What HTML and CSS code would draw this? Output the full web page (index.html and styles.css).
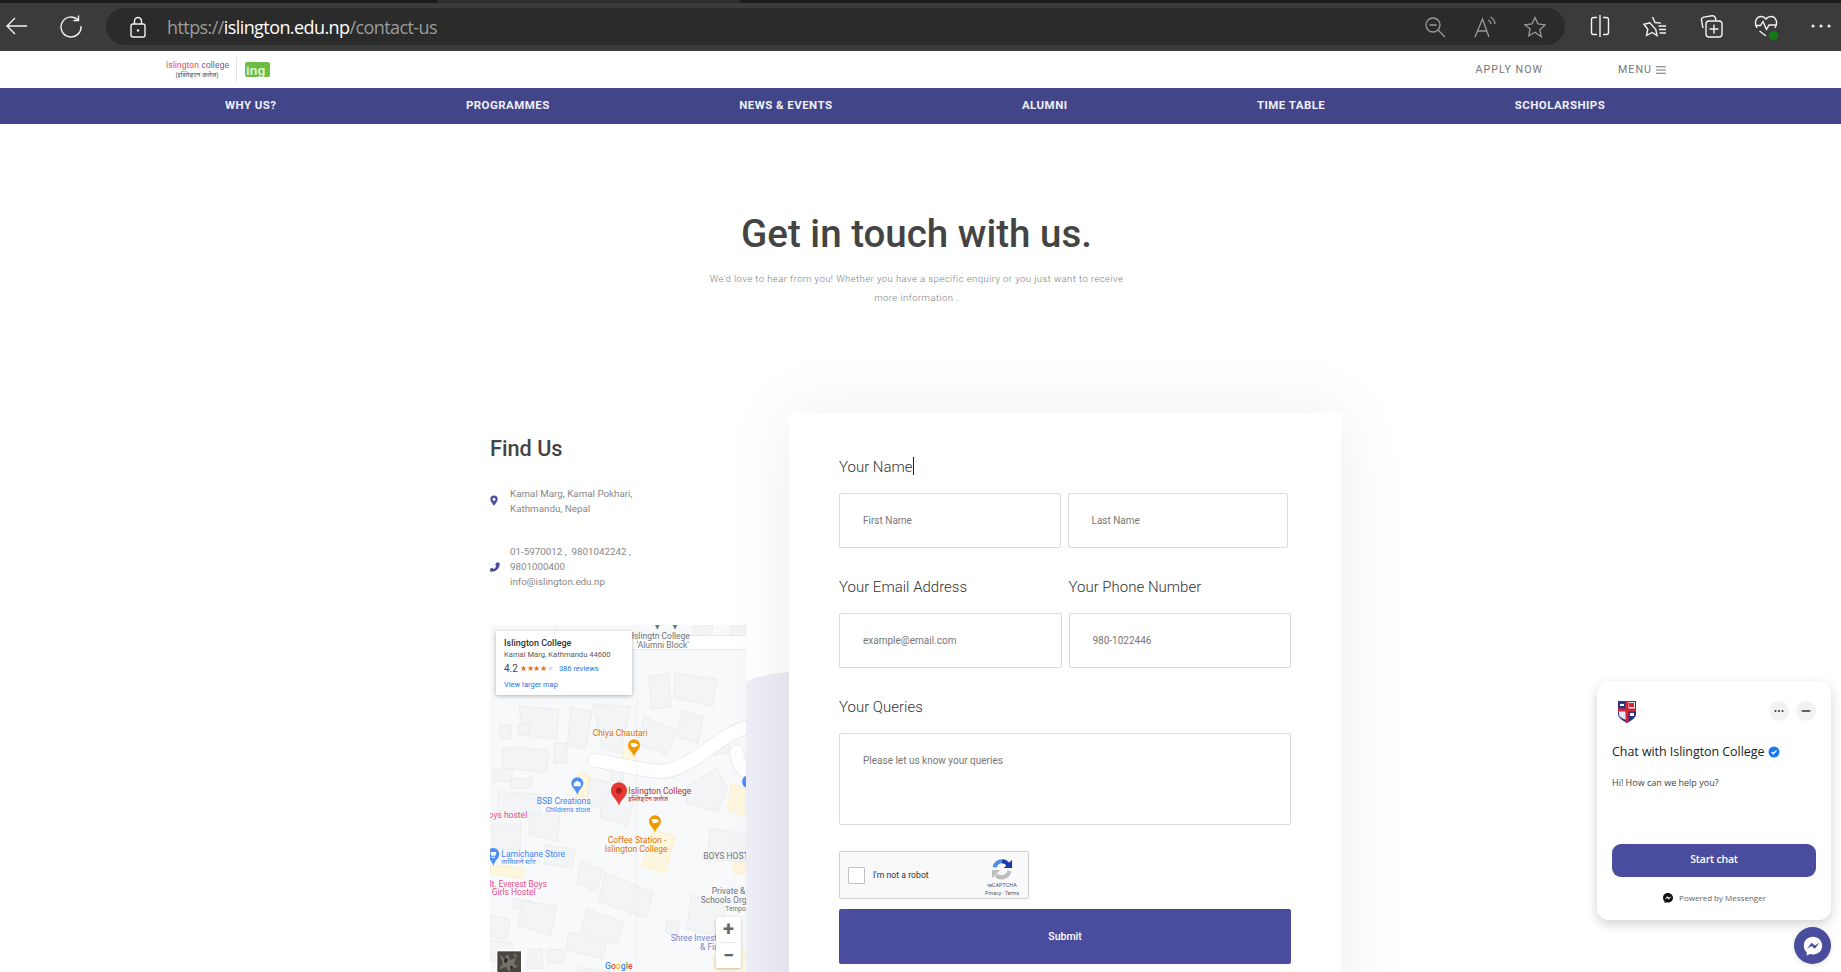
FILE: index.html
```html
<!DOCTYPE html>
<html lang="en">
<head>
<meta charset="utf-8">
<title>Contact Us - Islington College</title>
<link rel="stylesheet" href="styles.css">
</head>
<body>
<div class="browser">
  <div class="tabstrip"><span class="strip-a"></span><span class="strip-b"></span><span class="strip-c"></span></div>
  <div class="toolbar">
    <svg class="tool first" viewBox="0 0 24 24"><path d="M23 12H3M11 4l-8 8 8 8"/></svg>
    <svg class="tool reload" viewBox="0 0 24 24"><path d="M19 5.800A10 10 0 1 0 22 12M19.500 1.500v5h-5"/></svg>
    <div class="address">
      <svg class="tool lock" viewBox="0 0 24 24"><rect x="5" y="9" width="14" height="13" rx="2"/><path d="M8.500 9V6a3.500 3.500 0 0 1 7 0v3"/><circle class="solid" cx="12" cy="15.500" r="1.200"/></svg>
      <div class="url"><span class="dim">https://</span>islington.edu.np<span class="dim">/contact-us</span></div>
      <div class="addr-icons">
        <svg class="tool muted" viewBox="0 0 24 24"><circle cx="10" cy="10" r="7"/><path d="M15 15l7 7M6.500 10h7"/></svg>
        <svg class="tool muted" viewBox="0 0 24 24"><path d="M2 22L9.500 4 16 22M4.500 16h9.500M15 5a5 5 0 0 1 3 4M17.500 2a9 9 0 0 1 4.500 7"/></svg>
        <svg class="tool muted" viewBox="0 0 24 24"><path d="M12 2.500l3 6.500 7 .9-5.100 4.800 1.300 7L12 17.200l-6.200 3.500 1.300-7L2 9.900 9 9z"/></svg>
      </div>
    </div>
    <div class="tool-icons">
      <svg class="tool" viewBox="0 0 24 24"><path d="M9 3.500H5.500a2 2 0 0 0-2 2v13a2 2 0 0 0 2 2H9M15 3.500h3.500a2 2 0 0 1 2 2v13a2 2 0 0 1-2 2H15M12 1v22"/></svg>
      <svg class="tool" viewBox="0 0 24 24"><path d="M9.500 3L12 8.500l6 .6M12.800 15.500L14 21.500l-5-3-5.500 3 1.300-6.300L1 10.300l5.800-1.500zM15.500 12H23M16 15.500h7M16.500 19H23"/></svg>
      <svg class="tool" viewBox="0 0 24 24"><path d="M4 14L2.500 6.500a3 3 0 0 1 2.400-3.400L13 1.800a3 3 0 0 1 3.400 2.200l.6 2.500"/><rect x="7" y="7" width="16" height="16" rx="3"/><path d="M15 10.500v9M10.500 15h9"/></svg>
      <span class="heart">
        <svg class="tool" viewBox="0 0 24 24"><path d="M3 14C-.5 8 2.500 2.500 7 2.500c2.300 0 4 1 5 2.500 1-1.500 2.700-2.500 5-2.500 4.500 0 7.500 5.500 4 11.500M1 11.500h5.500l2.500-4 3.500 8 2.500-4.500h8M5.500 17l6.500 5"/></svg>
        <i class="heart-dot"></i>
      </span>
      <svg class="tool" viewBox="0 0 24 24"><circle class="solid" cx="4" cy="12" r="1.500"/><circle class="solid" cx="12" cy="12" r="1.500"/><circle class="solid" cx="20" cy="12" r="1.500"/></svg>
    </div>
  </div>
</div>

<header class="topbar">
  <div class="logo">
    <div class="logo-text">
      <div class="logo-main"><span class="red">íslington</span> <span class="blue">college</span></div>
      <div class="logo-sub">(इस्लिङ्टन कलेज)</div>
    </div>
    <span class="logo-rule"></span>
    <span class="logo-ing">ing</span>
  </div>
  <div class="top-links">
    <a class="apply">APPLY NOW</a>
    <a class="menu">MENU <svg class="burger" viewBox="0 0 10 8"><path d="M0 .75h10M0 4h10M0 7.250h10"/></svg></a>
  </div>
</header>

<nav class="mainnav">
  <a>WHY US?</a><a>PROGRAMMES</a><a>NEWS &amp; EVENTS</a><a>ALUMNI</a><a>TIME TABLE</a><a>SCHOLARSHIPS</a>
</nav>

<section class="hero">
  <h1>Get in touch with us.</h1>
  <p>We'd love to hear from you! Whether you have a specific enquiry or you just want to receive more information .</p>
</section>

<section class="contact">
  <div class="blob"></div>
  <aside class="find">
    <h2>Find Us</h2>
    <div class="info-row first-row">
      <svg class="info-icon" viewBox="0 0 12 16"><path fill-rule="evenodd" d="M6 .5a5.500 5.500 0 0 0-5.500 5.500C.5 9.500 6 15.500 6 15.500S11.500 9.500 11.500 6A5.500 5.500 0 0 0 6 .5zm0 3.200a2.300 2.300 0 1 1 0 4.600 2.300 2.300 0 0 1 0-4.600z"/></svg>
      <div>Kamal Marg, Kamal Pokhari,<br>Kathmandu, Nepal</div>
    </div>
    <div class="info-row">
      <svg class="info-icon phone" viewBox="0 0 16 16"><path d="M11 .5l4.500 1c.4 7.500-4.500 13.500-12.500 14-1.500.1-2.700-.4-2.800-1.400L.2 10.500l4.600-1 1.200 2c2-1.300 3.300-3.300 3.800-6L8 4.500z"/></svg>
      <div>01-5970012 ,&nbsp; 9801042242 ,<br>9801000400<br>info@islington.edu.np</div>
    </div>
    <div class="map">
      <svg class="map-canvas" viewBox="30 15 768 1041">
        <g class="lots">
          <path d="M430 382l40 4-10 46-32-6z"/><path d="M295 458l32 2-5 70-27 0z"/><path d="M520 630l65 20-30 110-68-22z"/><path d="M30 735l100 10-5 30-95-15z"/><path d="M755 490l50 20v80l-63-20z"/><path d="M765 720l40 8v36l-45-6z"/><path d="M700 1010l100-20v66H705z"/>
        </g>
        <g class="bld">
          <path d="M505 168l60-6 10 100-60 4z"/><path d="M585 158l125 20-13 82-115-28z"/><path d="M118 258l118 10-6 90-105-14z"/><path d="M272 262l65 14-20 112-55-14z"/><path d="M337 252l115 8-30 140-55-12z"/><path d="M492 290l100 42-30 72-90-30z"/><path d="M605 272l66 18-18 80-58-18z"/><path d="M60 312l35 3-3 42-32-3z"/><path d="M114 313h34v32h-34z"/><path d="M222 370h38v60h-38z"/><path d="M68 388l45-8 92 12-4 66-133-14z"/><path d="M38 448h58v36H38z"/><path d="M94 475h61v30H94z"/><path d="M392 450h38v32h-38z"/><path d="M330 472l62 18-14 80-56-18z"/><path d="M362 562l40-60 60 30-20 84-80-22z"/><path d="M55 515l130 8-8 72-125-8z"/><path d="M150 580l90 6-8 78-86-20z"/><path d="M35 612h88l-3 80-85-8z"/><path d="M195 675l90 12-8 58-84-14z"/><path d="M300 725l70 22-20 66-58-20z"/><path d="M375 758l145 60-22 78-142-52z"/><path d="M100 835l55 8-5 30-55-10z"/><path d="M128 845l102 12-18 88-98-28z"/><path d="M320 865l113 42-22 68-110-40z"/><path d="M30 885l60 15-12 60-48-12z"/><path d="M265 935l115 32-12 50-110-28z"/><path d="M560 900l40 8-8 38-36-8z"/><path d="M635 825l100 30-8 95-108-22z"/><path d="M690 625l110 18v80H680z"/><path d="M620 500l90-55 32 60-30 72-92-30z"/><path d="M145 990l40-5 5 60h-50z"/><path d="M200 990l50-3 4 40-50 4z"/><path d="M300 1042l100 14H290z"/><path d="M640 20l60-5-8 38-50-5z"/><path d="M748 20l50-5v34l-45 2z"/><path d="M700 380l50-8-2 26-48 8z"/><path d="M30 960l70 10-6 60-64-10z"/>
        </g>
        <g class="roads">
          <path d="M345 422c60 6 130 30 195 32 90 0 160-100 260-132"/><path d="M770 395c0 40 30 60 50 80"/><path d="M440 68h360"/>
        </g>
        <g class="roads-in">
          <path d="M345 422c60 6 130 30 195 32 90 0 160-100 260-132"/><path d="M770 395c0 40 30 60 50 80"/><path d="M440 68h360"/>
        </g>
        <path class="grid-line" d="M470 15v1041M230 15v40"/>
        <path class="pin-gray" d="M525 15h14l-7 14zM578 15h14l-7 14z"/>

        <g class="l-gray"><text x="455" y="58">Islingtn College</text><text x="470" y="85">'Alumni Block'</text><text x="670" y="716">BOYS HOSTEL</text><text x="695" y="823">Private &amp;</text><text x="662" y="850">Schools Org</text><text class="l-sm" x="736" y="872">Tempo</text></g>
        <g class="l-orange"><text x="338" y="348">Chiya Chautari</text><text x="383" y="668">Coffee Station -</text><text x="374" y="695">Islington College</text></g>
        <g class="l-blue"><text x="170" y="553">BSB Creations</text><text class="l-sm" x="197" y="575">Childrens store</text><text x="64" y="710">Lamichane Store</text><text class="l-sm" x="64" y="732">लामिछाने स्टोर</text></g>
        <g class="l-pink"><text x="10" y="595">Boys hostel</text><text x="12" y="800">Mt. Everest Boys</text><text x="35" y="826">Girls Hostel</text></g>
        <g class="l-red"><text x="445" y="522">Islington College</text><text class="l-sm" x="445" y="542">इस्लिङ्टन कलेज</text></g>
        <g class="l-indigo"><text x="572" y="964">Shree Invest</text><text x="660" y="990">&amp; Fin</text></g>

        <path class="mk-orange" d="M462 358a18 18 0 0 1 18 18c0 14-14 18-18 34-4-16-18-20-18-34a18 18 0 0 1 18-18z"/>
        <path class="mk-white" d="M452 369h17v3h4v7h-5a8 8 0 0 1-6 3c-6 0-10-5-10-13z"/>
        <path class="mk-orange" d="M525 586a18 18 0 0 1 18 18c0 14-14 18-18 34-4-16-18-20-18-34a18 18 0 0 1 18-18z"/>
        <path class="mk-white" d="M515 597h17v3h4v7h-5a8 8 0 0 1-6 3c-6 0-10-5-10-13z"/>
        <path class="mk-blue" d="M292 472a18 18 0 0 1 18 18c0 14-14 18-18 36-4-18-18-22-18-36a18 18 0 0 1 18-18z"/>
        <path class="mk-white" d="M283 486h18l2 13h-22zM288 486a4 4 0 0 1 8 0"/>
        <path class="mk-blue" d="M40 684a18 18 0 0 1 18 18c0 14-14 18-18 36-4-18-18-22-18-36a18 18 0 0 1 18-18z"/>
        <path class="mk-white" d="M31 696h18l-3 11H34zM34 710h11v3H34z"/>
        <circle class="mk-blue" cx="805" cy="485" r="19"/>
        <path class="mk-red" d="M417 487c14 0 24 11 24 25 0 18-18 24-24 45-6-21-24-27-24-45 0-14 10-25 24-25z"/>
        <circle class="mk-dark" cx="417" cy="512" r="9"/>

        <text class="g-logo" x="375" y="1048"><tspan class="g-b">G</tspan><tspan class="g-r">o</tspan><tspan class="g-y">o</tspan><tspan class="g-b">g</tspan><tspan class="g-g">l</tspan><tspan class="g-r">e</tspan></text>

        <rect class="sat" x="50" y="992" width="75" height="70"/>
        <path class="sat-a" d="M58 1004l14 10 12-12 6 18 18-6-6 18 12 10-20 2-6 12-10-16-16 6 6-18zM100 1000l12 6-6 8zM62 1036l8 8-10 4z"/>
        <path class="sat-b" d="M74 1012l10 6-4 12-8-4zM92 1036l8 4-4 10-6-6z"/>
      </svg>
      <div class="map-card">
        <div class="mc-title">Islington College</div>
        <div class="mc-addr">Kamal Marg, Kathmandu 44600</div>
        <div class="mc-rate"><span class="mc-num">4.2</span><span class="mc-stars">★★★★<span class="mc-off">★</span></span><a class="mc-link">386 reviews</a></div>
        <a class="mc-link mc-larger">View larger map</a>
      </div>
      <div class="zoom-ctl"><span>+</span><i></i><span>−</span></div>
    </div>
  </aside>

  <form class="card">
    <label class="lbl">Your Name<span class="caret"></span></label>
    <div class="fields fields-a">
      <input type="text" placeholder="First Name">
      <input type="text" placeholder="Last Name">
    </div>
    <div class="fields fields-b labels">
      <label class="lbl">Your Email Address</label>
      <label class="lbl">Your Phone Number</label>
    </div>
    <div class="fields fields-b">
      <input type="text" placeholder="example@email.com">
      <input type="text" placeholder="980-1022446">
    </div>
    <label class="lbl spaced">Your Queries</label>
    <textarea placeholder="Please let us know your queries"></textarea>
    <div class="captcha">
      <span class="cap-box"></span>
      <span class="cap-label">I'm not a robot</span>
      <div class="cap-brand">
        <svg class="cap-logo" viewBox="0 0 24 24"><path class="cap-b" d="M4 10A8.500 8.500 0 0 1 12 3.500"/><path class="cap-d" d="M12 3.500c3 0 5.500 1.500 7 4"/><path class="cap-arrow" d="M23 2v9h-9z"/><path class="cap-g" d="M20 14a8.500 8.500 0 0 1-14.500 4.500"/><path class="cap-g2" d="M1 13h9l-9 9z"/></svg>
        <div class="cap-name">reCAPTCHA</div>
        <div class="cap-terms">Privacy - Terms</div>
      </div>
    </div>
    <button class="submit" type="button">Submit</button>
  </form>
</section>

<aside class="chat">
  <div class="chat-head">
    <svg class="crest" viewBox="0 0 18 22"><path class="c-blue" d="M0 0h18v13c0 4-5 7-9 9-4-2-9-5-9-9z"/><path class="c-white" d="M10 1h7v7h-7zM1 10h7v9c-4-2-7-3-7-6z"/><path class="c-red" d="M7.500 0h3v21l-1.500 1-1.500-1zM0 7.500h18v3H0zM11 2h5v4h-5z"/><path class="c-mid" d="M2 3h4v2H2zM12 12h4v3h-4z"/></svg>
    <div class="chat-btns">
      <span class="chat-btn"><svg viewBox="0 0 12 12"><circle cx="2.500" cy="6" r="1"/><circle cx="6" cy="6" r="1"/><circle cx="9.500" cy="6" r="1"/></svg></span>
      <span class="chat-btn"><svg viewBox="0 0 12 12"><rect x="1.500" y="5.200" width="9" height="1.600" rx=".8"/></svg></span>
    </div>
  </div>
  <div class="chat-title">Chat with Islington College <svg class="verified" viewBox="0 0 12 12"><circle class="v-bg" cx="6" cy="6" r="5.500"/><path class="v-tick" d="M3.500 6l1.800 1.800L8.500 4.500"/></svg></div>
  <div class="chat-msg">Hi! How can we help you?</div>
  <button class="chat-start" type="button">Start chat</button>
  <div class="chat-foot">
    <svg class="m-small" viewBox="0 0 24 24"><path d="M12 2C6.400 2 2 6.100 2 11.700c0 2.900 1.200 5.500 3.200 7.200v3.600l3.300-1.800c1.100.3 2.300.5 3.500.5 5.600 0 10-4.100 10-9.500S17.600 2 12 2z"/><path class="m-zig" d="M5.500 15l5-6.500 3.500 3 5-3-5 6.500-3.500-3z"/></svg>
    <span>Powered by Messenger</span>
  </div>
</aside>
<button class="chat-fab" type="button" aria-label="Open chat">
  <svg viewBox="0 0 24 24"><path d="M12 2C6.400 2 2 6.100 2 11.700c0 2.900 1.200 5.500 3.200 7.200v3.600l3.300-1.800c1.100.3 2.300.5 3.500.5 5.600 0 10-4.100 10-9.500S17.600 2 12 2z"/><path class="fab-zig" d="M5.500 15l5-6.500 3.500 3 5-3-5 6.500-3.500-3z"/></svg>
</button>
</body>
</html>
```
FILE: styles.css
```css
* { box-sizing: border-box; }
html, body { margin: 0; height: 972px; overflow: hidden; background: #fff; }
body { font-family: Roboto, "Noto Sans", sans-serif; color: #444; position: relative; }

/* browser chrome */
.browser { height: 51px; background: #3b3b3b; }
.tabstrip { display: flex; height: 3px; }
.strip-a { width: 438px; background: #1a1a1a; }
.strip-b { width: 302px; background: #2e2e2e; }
.strip-c { flex: 1; background: #1c1c1c; }
.toolbar { display: flex; align-items: flex-start; height: 48px; padding: 5px 8px 0 4px; }
.tool { width: 24px; height: 24px; fill: none; stroke: #f2f2f2; stroke-width: 1.4; flex: none; }
.tool .solid { fill: #f2f2f2; stroke: none; }
.toolbar > .first { margin-top: 6px; }
.toolbar > .reload { margin: 6px 0 0 31px; }
.address { flex: 1; margin-left: 23px; height: 37px; border-radius: 19px; background: #2b2b2b; display: flex; align-items: center; padding: 0 18px 0 20px; }
.url { margin-left: 17px; font: 400 18px "Open Sans", sans-serif; letter-spacing: -.58px; color: #fff; white-space: nowrap; }
.dim { color: #9b9b9b; }
.addr-icons { margin-left: auto; display: flex; gap: 26px; }
.muted { stroke: #9a9a9a; stroke-width: 1.3; }
.tool-icons { display: flex; gap: 31.250px; margin-left: 23px; padding-top: 6px; }
.heart { position: relative; width: 24px; height: 24px; }
.heart-dot { position: absolute; right: 0; bottom: -2px; width: 9px; height: 9px; border-radius: 50%; background: #107c10; }

/* site header */
.topbar { height: 37px; display: flex; align-items: center; justify-content: space-between; padding: 0 175px 0 166px; }
.logo { display: flex; align-items: center; }
.logo-text { width: 62px; text-align: center; }
.logo-main { font: 400 8.400px/10px "Liberation Sans", sans-serif; white-space: nowrap; letter-spacing: .2px; }
.red { color: #ee3a4a; }
.blue { color: #5557a8; }
.logo-sub { font: 400 6.500px/9px "Noto Sans", "Noto Sans Devanagari", sans-serif; color: #555; white-space: nowrap; }
.logo-rule { width: 1px; height: 25px; background: #e4e4e4; margin-left: 8px; }
.logo-ing { width: 25px; height: 15px; margin-left: 8px; background: #6cbd45; border-radius: 2px; color: #dff3cf; font: 700 13px/17px "Liberation Sans", sans-serif; padding-left: 1px; overflow: hidden; }
.top-links { display: flex; align-items: center; color: #777; font-size: 10.700px; letter-spacing: 1px; }
.menu { margin-left: 75px; display: flex; align-items: center; gap: 4px; }
.burger { width: 10px; height: 8px; fill: none; stroke: #777; stroke-width: 1.100; }

.mainnav { height: 36px; background: #434589; display: flex; align-items: center; gap: 189.400px; padding: 0 0 2px 225px; color: #f0f0f8; font-size: 11.500px; font-weight: 700; letter-spacing: .45px; white-space: nowrap; }

/* hero */
.hero { padding: 86px 8px 0 0; text-align: center; }
.hero h1 { margin: 0; font-size: 38.500px; line-height: 48px; font-weight: 500; color: #444; }
.hero p { margin: 11px auto 0; width: 425px; font-size: 9.500px; line-height: 19px; letter-spacing: .43px; font-weight: 300; color: #7d7d7d; }

/* contact */
.contact { position: relative; display: flex; margin-top: 106px; padding-left: 490px; }
.blob { position: absolute; left: 746px; top: 257px; width: 120px; height: 320px; border-top-left-radius: 90px 14px; background: linear-gradient(to right, #efeff7, #e3e4f0); }
.find { width: 256px; flex: none; padding-top: 23px; font-size: 9.800px; line-height: 15px; color: #888; }
.find h2 { margin: 0 0 23.500px; font-size: 21.700px; line-height: 26px; font-weight: 500; color: #444; }
.info-row { display: flex; align-items: center; margin-bottom: 28px; }
.info-icon { width: 8px; height: 11px; fill: #4a4d9d; margin-right: 12px; flex: none; }
.phone { width: 10px; height: 10px; margin: 2px 10px 0 0; }
.map { position: relative; margin-top: 36px; width: 256px; height: 347px; background: #f8f9fa; overflow: hidden; }
.map-canvas { position: absolute; inset: 0; width: 256px; height: 347px; font-family: Roboto, "Noto Sans", "Noto Sans CJK SC", sans-serif; font-size: 25.500px; }
.lots path { fill: #fef7e0; stroke: #fde9b0; stroke-width: 2; }
.bld path { fill: #f3f4f5; stroke: #e6e8ea; stroke-width: 2; }
.roads path { fill: none; stroke: #e3e5e8; stroke-width: 44; stroke-linecap: round; }
.roads-in path { fill: none; stroke: #fff; stroke-width: 40; stroke-linecap: round; }
.grid-line { stroke: #eceef0; stroke-width: 2; fill: none; }
.pin-gray { fill: #607d8b; }
.l-gray { fill: #70757a; }
.l-orange { fill: #e37400; }
.l-blue { fill: #4285f4; }
.l-pink { fill: #ea4c89; }
.l-red { fill: #b3312a; }
.l-indigo { fill: #7986cb; }
.l-sm { font-size: 20px; }
.mk-orange { fill: #f29900; }
.mk-blue { fill: #4e8ef7; }
.mk-red { fill: #e53935; }
.mk-dark { fill: #a61b14; }
.mk-white { fill: #fff; }
.g-logo { font-size: 26px; font-weight: 500; }
.g-b { fill: #4285f4; }
.g-r { fill: #ea4335; }
.g-y { fill: #fbbc05; }
.g-g { fill: #34a853; }
.sat { fill: #4a4640; stroke: #fff; stroke-width: 4; }
.sat-a { fill: #77726b; }
.sat-b { fill: #2e2b27; }
.map-card { position: absolute; left: 6px; top: 6px; width: 136px; height: 64px; background: #fff; box-shadow: 0 1px 4px rgba(0,0,0,.3); padding: 6px 8px; font-size: 8px; line-height: 12px; color: #5b5b5b; }
.mc-title { font-size: 9px; font-weight: 500; color: #333; line-height: 12px; }
.mc-addr { font-size: 7.600px; }
.mc-rate { display: flex; align-items: center; height: 13px; margin-top: 2px; }
.mc-num { font-size: 10px; color: #444; margin-right: 2px; }
.mc-stars { font-size: 7.500px; color: #e7711b; letter-spacing: -.2px; width: 39px; }
.mc-off { color: #ddd; }
.mc-link { color: #1a73e8; font-size: 7.500px; }
.mc-larger { display: block; margin-top: 3px; }
.zoom-ctl { position: absolute; left: 226px; top: 292px; width: 25px; height: 51px; background: #fff; box-shadow: 0 1px 3px rgba(0,0,0,.25); border-radius: 2px; display: flex; flex-direction: column; align-items: center; color: #666; font-size: 20px; font-weight: 700; line-height: 25px; }
.zoom-ctl i { width: 15px; height: 1px; background: #e6e6e6; flex: none; }

/* form */
.card { position: relative; flex: none; width: 552px; margin-left: 43px; padding: 44px 50px 40px; height: 620px; background: #fff; box-shadow: 0 0 70px rgba(0,0,0,.07); }
.lbl { display: block; font-size: 15px; line-height: 20px; color: #333; font-weight: 300; }
.caret { display: inline-block; width: 1px; height: 18px; background: #222; vertical-align: -3px; }
.fields { display: grid; }
.fields-a { grid-template-columns: 222px 220px; column-gap: 6.500px; margin-top: 16px; }
.fields-b { grid-template-columns: 222.500px 222px; column-gap: 7px; margin-top: 16px; }
.labels { margin-top: 29px; }
.spaced { margin-top: 29px; }
input, textarea { display: block; width: 100%; font: 400 10px/14px Roboto, sans-serif; color: #555; background: #fff; border: 1px solid #dcdcdc; border-radius: 2px; outline: 0; margin: 0; }
input { height: 55px; padding: 0 23px; }
textarea { width: 452px; height: 91.500px; margin-top: 16px; padding: 20px 23px; resize: none; }
input::placeholder, textarea::placeholder { color: #777; opacity: 1; }
.captcha { position: relative; margin-top: 26.500px; width: 190px; height: 48px; background: #f9f9f9; border: 1px solid #d3d3d3; border-radius: 2px; box-shadow: 0 0 2px rgba(0,0,0,.08); display: flex; align-items: center; padding-left: 8px; }
.cap-box { width: 17px; height: 17px; background: #fff; border: 1px solid #c1c1c1; border-radius: 1px; flex: none; }
.cap-label { margin-left: 8px; font-size: 8.700px; color: #333; }
.cap-brand { position: absolute; right: 6px; top: 6px; width: 40px; text-align: center; color: #555; }
.cap-logo { display: block; width: 22px; height: 22px; margin: 0 auto; fill: none; stroke-width: 4.500; }
.cap-b { stroke: #4a90e2; }
.cap-d { stroke: #1c3aa9; }
.cap-arrow { fill: #1c3aa9; }
.cap-g { stroke: #bdbdbd; }
.cap-g2 { fill: #bdbdbd; }
.cap-name { font-size: 5.500px; line-height: 8px; margin-top: 1px; white-space: nowrap; }
.cap-terms { font-size: 5px; line-height: 8px; white-space: nowrap; }
.submit { display: block; width: 452px; height: 55px; margin-top: 10px; border: 0; border-radius: 2px; background: #4a4d9d; color: #fff; font: 500 10.500px Roboto, sans-serif; }

/* chat */
.chat { position: absolute; left: 1597px; top: 681px; width: 234px; height: 239px; padding: 20px 15px 0; background: #fff; border-radius: 12px; box-shadow: 0 4px 12px rgba(0,0,0,.18); font-family: "Open Sans", sans-serif; z-index: 3; }
.chat-head { display: flex; justify-content: space-between; height: 22px; }
.crest { width: 18px; height: 22px; margin-left: 6px; }
.c-blue { fill: #2c348a; }
.c-white { fill: #e8e8f2; }
.c-red { fill: #d8232f; }
.c-mid { fill: #fff; }
.chat-btns { display: flex; gap: 7px; }
.chat-btn { width: 20px; height: 20px; border-radius: 50%; background: #f2f2f2; display: flex; align-items: center; justify-content: center; }
.chat-btn svg { width: 12px; height: 12px; fill: #333; }
.chat-title { margin-top: 20px; display: flex; align-items: center; gap: 4px; font-size: 12.500px; line-height: 18px; letter-spacing: -.06px; color: #1c1e21; white-space: nowrap; }
.verified { width: 12px; height: 12px; }
.v-bg { fill: #1877f2; }
.v-tick { fill: none; stroke: #fff; stroke-width: 1.300; }
.chat-msg { margin-top: 15px; font-size: 9px; line-height: 14px; color: #444; }
.chat-start { display: block; width: 204px; height: 33px; margin-top: 54px; border: 0; border-radius: 9px; background: #4a4d9d; color: #fff; font: 600 10.500px/31px "Open Sans", sans-serif; letter-spacing: -.2px; padding: 0 0 2px; }
.chat-foot { display: flex; align-items: center; justify-content: center; gap: 5px; margin-top: 14px; font-size: 8px; line-height: 14px; color: #65676b; }
.m-small { width: 12px; height: 12px; fill: #111; }
.m-zig { fill: #fff; }
.chat-fab { position: absolute; left: 1794px; top: 927px; width: 37px; height: 37px; padding: 7.500px; border: 0; border-radius: 50%; background: #4a4d9d; box-shadow: 0 1px 4px rgba(0,0,0,.12); z-index: 3; }
.chat-fab svg { display: block; width: 22px; height: 22px; fill: #fff; }
.fab-zig { fill: #4a4d9d; }
```
